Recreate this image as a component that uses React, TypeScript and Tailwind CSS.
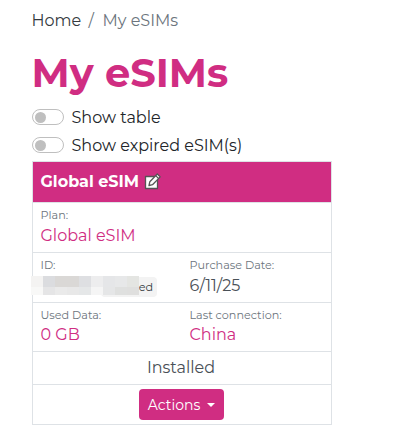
import { useState } from 'react';

interface ToggleProps {
  label: string;
}

function Toggle({ label }: ToggleProps) {
  const [on, setOn] = useState(false);

  return (
    <label className="flex items-center h-7 gap-[7.5px]">
      <button
        role="switch"
        aria-checked={on}
        onClick={() => setOn(!on)}
        className={`flex items-center w-8 h-4 px-[1.5px] rounded-full border border-[#bfbfbf] bg-white ${on ? 'justify-end' : ''}`}
      >
        <span className="w-[11px] h-[11px] rounded-full bg-[#bfbfbf]" />
      </button>
      <span className="pt-px text-base leading-6 whitespace-nowrap text-[#212529]">{label}</span>
    </label>
  );
}

interface FieldProps {
  label: string;
  value: string;
  valueClass: string;
}

function Field({ label, value, valueClass }: FieldProps) {
  return (
    <div className="w-[149px] pl-[7.5px] pt-[3px] whitespace-nowrap">
      <div className="text-[11.2px] leading-[18px] text-[#6c757d]">{label}</div>
      <div className={`text-base leading-6 ${valueClass}`}>{value}</div>
    </div>
  );
}

const MASK = [
  ['bg-[#f4f3f2]', 'bg-[#dbdcdf]', 'bg-[#dad8d6]', 'bg-[#dad8d6]', 'bg-[#dedfe2]', 'bg-[#ededee]', 'bg-[#e5e6e8]', 'bg-[#e7e8e9]', 'bg-[#e4e5e2]'],
  ['bg-[#f8f8f7]', 'bg-[#e5e5e6]', 'bg-[#eaeaea]', 'bg-[#e8e8e8]', 'bg-[#e5e7e8]', 'bg-[#f5f5f5]', 'bg-[#e5e6e7]', 'bg-[#dfe0df]', 'bg-[#dfdfde]'],
];

function MaskedId() {
  return (
    <div className="relative w-[149px]">
      <div className="pl-[7.5px] pt-[3px] text-[11.2px] leading-[18px] text-[#6c757d]">ID:</div>
      <div className="absolute left-[68px] top-6 w-14 h-5 rounded bg-[#f3f3f3] pr-1 text-right text-[11.2px] leading-5 text-[#343a40]">
        ed
      </div>
      <div className="absolute -left-[2px] top-[23px]">
        {MASK.map((row, i) => (
          <div key={i} className="flex">
            {row.map((color, j) => (
              <span key={j} className={`w-3 ${i === 0 ? 'h-[11px]' : 'h-2'} ${color}`} />
            ))}
          </div>
        ))}
      </div>
    </div>
  );
}

function EditIcon() {
  return (
    <svg width="18" height="18" viewBox="0 0 18 18" className="-mt-[3px]" strokeLinejoin="round">
      <path d="M1.5 4.5h12v12h-12z" fill="#fff" stroke="#555" strokeWidth="1.3" />
      <path d="M5 13.5l.8-3.7L13.3 2l2.9 2.9-7.7 7.8z" fill="#fff" stroke="#555" strokeWidth="1.3" />
      <path d="M11.7 3.6l2.9 2.9" fill="none" stroke="#555" strokeWidth="1.2" />
    </svg>
  );
}

export default function App() {
  return (
    <div className="w-[414px] h-[446px] overflow-hidden bg-white pl-8 pt-2 font-[Montserrat,Inter,sans-serif]">
      <nav className="flex h-6 gap-2 pt-px text-base leading-6 whitespace-nowrap">
        <a className="w-[49px] -ml-[0.5px] text-[#343a40]">Home</a>
        <span className="w-[6px] text-[#6c757d]">/</span>
        <span className="text-[#6c757d]">My eSIMs</span>
      </nav>
      <h1 className="mt-[17px] -ml-[0.5px] h-[54px] text-[40px] leading-[48px] font-bold text-[#d02d82] whitespace-nowrap">
        My eSIMs
      </h1>
      <Toggle label="Show table" />
      <Toggle label="Show expired eSIM(s)" />

      <div className="mt-[2px] w-[300px] border border-[#dee2e6] divide-y divide-[#dee2e6]">
        <div className="flex items-center h-[41px] pl-[7.5px] gap-[5px] bg-[#d02d82] text-white">
          <span className="text-base font-bold whitespace-nowrap">Global eSIM</span>
          <EditIcon />
        </div>
        <div className="flex h-[50px]">
          <Field label="Plan:" value="Global eSIM" valueClass="text-[#d02d82]" />
        </div>
        <div className="flex h-[50px]">
          <MaskedId />
          <Field label="Purchase Date:" value="6/11/25" valueClass="text-[#495057]" />
        </div>
        <div className="flex h-[49px]">
          <Field label="Used Data:" value="0 GB" valueClass="-mt-px text-[#d02d82]" />
          <Field label="Last connection:" value="China" valueClass="-mt-px text-[#d02d82]" />
        </div>
        <div className="h-[33px] pr-[2px] text-center text-base leading-8 text-[#495057]">Installed</div>
        <div className="flex justify-center h-[39px] pt-1 pr-px">
          <button className="flex items-center justify-center w-[85px] h-[31px] gap-[7px] rounded bg-[#d02d82] text-sm text-white">
            Actions
            <span className="border-x-4 border-t-4 border-x-transparent border-t-white" />
          </button>
        </div>
      </div>
    </div>
  );
}
